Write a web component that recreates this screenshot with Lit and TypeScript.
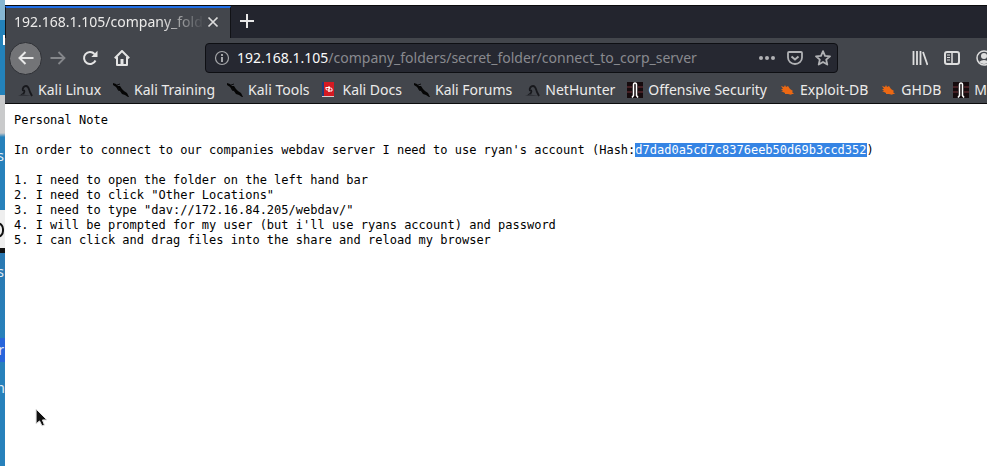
import { LitElement, html, css, svg } from "lit";
import { customElement } from "lit/decorators.js";

const icons: Record<string, unknown> = {
  linux: svg`<path d="M4 13c3-1 4-3 3-5M6 9c-1-3 1-5 3-5 3 0 3 4 4 6l2 4" fill="none" stroke="#17181c" stroke-width="1.800"/><path d="M1 14l5-2 3 1 6 1z" fill="#303238"/>`,
  knife: svg`<path d="M0 1l3 1 2 2 2 0 2 3 2 2 3 2 2 4-1 0-3-2-3-1-2-3-2-1-2-3-3-2z" fill="#050505"/><path d="M4 3l3-1M6 6l-1 2 3 1" stroke="#0c0c0e" fill="none"/>`,
  docs: svg`<path d="M1 0h2v14H1z" fill="#203c7b"/><path d="M3 0h10v14H3z" fill="#d51a22"/><path d="M1 14h12v1H1z" fill="#d8cfd0"/><path d="M5 5v2q0 1 1.500 1T8 7t1.500-1T11 7v2M5 5.500h4M7 9h4M8 4v6" stroke="#fff" fill="none"/>`,
  offsec: svg`<path d="M0 0h16v16H0z" fill="#160b0e"/><path d="M0 5h5M11 5h5M0 10h5M11 10h5" stroke="#56272d" stroke-width="1.500"/><path d="M5 15.500l1.500-2V3q0-2 1.500-2t1.500 2v10.500l1.500 2" fill="#130a0c" stroke="#fff" stroke-width="1.500"/><path d="M6 2h1v11H6z" fill="#fff"/>`,
  exploit: svg`<path d="M2 4l3 1 1-2 1 2 2-1 2 3 3 2-1 1 2 2-3 0 1 1-4-1-3 0 0-1-4-2 2 0-2-2 2 0z" fill="#ec6813"/>`,
};

const bookmarks: [string, string][] = [
  ["linux", "Kali Linux"], ["knife", "Kali Training"], ["knife", "Kali Tools"],
  ["docs", "Kali Docs"], ["knife", "Kali Forums"], ["linux", "NetHunter"],
  ["offsec", "Offensive Security"], ["exploit", "Exploit-DB"], ["exploit", "GHDB"], ["offsec", "MSFU"],
];

const glyph = (body: unknown) => html`<svg viewBox="0 0 16 16" width="16" height="16" aria-hidden="true">${body}</svg>`;

@customElement("app-root")
export class AppRoot extends LitElement {
  static styles = css`
    :host { display: grid; grid-template-columns: 5px minmax(0, 1fr); min-height: 100vh; background: #fff; overflow: hidden;
      font-family: "Noto Sans", sans-serif; font-size: 14px; line-height: 20px; color: #ecebea; }
    * { box-sizing: border-box; }
    button { border: 0; padding: 0; margin: 0; background: none; color: inherit; font: inherit; display: grid; place-items: center; flex: none; }
    svg { display: block; flex: none; }
    .desktop { position: relative; overflow: hidden; background: linear-gradient(#86b6d2 20px, #2382ba 20px, #2382ba 95px, #c9cacb 95px, #c9cacb 133px, #2781bb 137px, #2781bb 210px, #eee 210px, #eee 248px, #111 248px, #111 253px, #2a78b1 253px, #2781bb 338px, #2865db 338px, #2865db 362px, #2781bb 362px); }
    .piece { position: absolute; right: 1px; line-height: 16px; color: #e3edf4; }
    .a { top: 148px; } .b { top: 264px; } .c { top: 342px; } .d { top: 380px; right: 0; }
    .folder { position: absolute; left: 3px; top: 35px; width: 2px; height: 10px; background: #fff; }
    .ring { position: absolute; right: 1px; top: 222px; width: 14px; height: 16px; border: 2px solid #111; border-radius: 8px; }
    .window { padding-top: 5px; min-width: 0; }
    .tabs { height: 33px; display: flex; background: #23252e; border-top: 1px solid #0c0c0d; }
    .tab { width: 226px; display: flex; align-items: center; padding: 0 9px 2px 8px; background: #43464c; border-top: 2px solid #1f6fe8; border-right: 1px solid #111216; border-left: 1px solid #111216; }
    .title { flex: 1; overflow: hidden; white-space: nowrap; -webkit-mask-image: linear-gradient(90deg, #000 76%, transparent); mask-image: linear-gradient(90deg, #000 76%, transparent); }
    .plus { width: 32px; padding-bottom: 2px; }
    .toolbar { height: 40px; display: flex; align-items: center; background: #43464c; padding-left: 4px; overflow: hidden; }
    .back { width: 33px; height: 33px; border-radius: 50%; background: #737477; border: 1px solid #2e3035; }
    .nav { width: 32px; height: 32px; }
    .off { color: #85878b; }
    .url { flex: 1; min-width: 0; height: 30px; margin-left: 67px; margin-right: 66px; display: flex; align-items: center; background: #262831; border: 1px solid #0e0f13; border-radius: 4px; color: #b1b2b5; padding: 0 0 0 8px; }
    .address { flex: 1; margin-left: 7px; white-space: nowrap; overflow: hidden; color: #898a8f; }
    .address b { font-weight: 400; color: #fafafa; }
    .act { width: 28px; height: 28px; }
    .edge { margin-right: -13px; }
    .bookmarks { height: 26px; display: flex; align-items: center; gap: 12px; padding: 0 0 2px 12px; background: #43464c; border-bottom: 1px solid #0c0c0d; overflow: hidden; }
    .bookmarks a { display: flex; align-items: center; gap: 5px; color: inherit; text-decoration: none; white-space: nowrap; flex: none; }
    pre { margin: 9px 9px; font: 12px/15px "DejaVu Sans Mono", monospace; text-rendering: optimizeSpeed; color: #000; }
    mark { background: #3584e4; color: #fff; }
    .cursor { position: absolute; left: 35px; top: 408px; }
  `;

  render() {
    return html`
      <div class="desktop" aria-hidden="true">
        <i class="folder"></i><span class="piece a">s</span><i class="ring"></i><span class="piece b">s</span><span class="piece c">r</span><span class="piece d">n</span>
      </div>
      <div class="window">
        <div class="tabs">
          <div class="tab"><span class="title">192.168.1.105/company_folders</span>
            <button aria-label="Close tab">${glyph(svg`<path d="M3.500 3.500l9 9m0-9l-9 9" stroke="#dcdcdc" stroke-width="1.700"/>`)}</button></div>
          <button class="plus" aria-label="New tab">${glyph(svg`<path d="M8 1v14M1 8h14" stroke="#e8e8e8" stroke-width="2"/>`)}</button>
        </div>
        <div class="toolbar">
          <button class="back" aria-label="Back">${glyph(svg`<path d="M15.500 8H1.500M7.500 2L1.500 8l6 6" fill="none" stroke="#e8e8e8" stroke-width="2"/>`)}</button>
          <button class="nav off" aria-label="Forward" disabled>${glyph(svg`<path d="M.5 8h14M8.500 2l6 6-6 6" fill="none" stroke="currentColor" stroke-width="1.800"/>`)}</button>
          <button class="nav" aria-label="Reload">${glyph(svg`<path d="M13.500 10.500A6 6 0 1 1 12.500 4" fill="none" stroke="#e4e4e4" stroke-width="2"/><path d="M15.500.8v6.200h-6.200z" fill="#e4e4e4"/>`)}</button>
          <button class="nav" aria-label="Home">${glyph(svg`<path d="M.8 8.200L8 1l7.200 7.200M3 7v8h10V7" fill="none" stroke="#e4e4e4" stroke-width="2" stroke-linejoin="round"/><path d="M6.500 9h3v5h-3z" fill="#e4e4e4"/>`)}</button>
          <div class="url">
            ${glyph(svg`<circle cx="8" cy="8" r="6.500" fill="none" stroke="#a5a6a9" stroke-width="1.200"/><path d="M8 7v5M8 4v2" stroke="#a5a6a9" stroke-width="2"/>`)}
            <span class="address"><b>192.168.1.105</b>/company_folders/secret_folder/connect_to_corp_server</span>
            <button class="act" aria-label="Page actions">${glyph(svg`<circle cx="2" cy="8" r="2" fill="currentColor"/><circle cx="8" cy="8" r="2" fill="currentColor"/><circle cx="14" cy="8" r="2" fill="currentColor"/>`)}</button>
            <button class="act" aria-label="Save to Pocket">${glyph(svg`<path d="M2 2h12q1 0 1 1v4.500a7 6.500 0 0 1-14 0V3q0-1 1-1z" fill="none" stroke="currentColor" stroke-width="1.800"/><path d="M4.500 6.500L8 9.500l3.500-3" fill="none" stroke="currentColor" stroke-width="2"/>`)}</button>
            <button class="act" aria-label="Bookmark this page">${glyph(svg`<path d="M8 1.200l2 4.600 5 .5-3.800 3.300 1.100 5L8 12l-4.300 2.600 1.100-5L1 6.300l5-.5z" fill="none" stroke="currentColor" stroke-width="1.800" stroke-linejoin="round"/>`)}</button>
          </div>
          <button class="nav" aria-label="Library">${glyph(svg`<path d="M1.500 1v14M5 1v14M8.500 1v14M11 2l4.500 13" fill="none" stroke="#dedede" stroke-width="1.800"/>`)}</button>
          <button class="nav" aria-label="Sidebars">${glyph(svg`<rect x="1" y="2" width="14" height="12" rx="2" fill="none" stroke="#dedede" stroke-width="2"/><path d="M8 2v12" stroke="#dedede" stroke-width="1.500"/><path d="M3 5h3M3 7.500h3M3 10h3" stroke="#dedede"/>`)}</button>
          <button class="nav edge" aria-label="Account">${glyph(svg`<circle cx="8" cy="8" r="7" fill="none" stroke="#dedede" stroke-width="1.500"/><circle cx="8" cy="6" r="3" fill="#dedede"/><path d="M3 12q5-4 10 0-5 4-10 0z" fill="#dedede"/>`)}</button>
        </div>
        <nav class="bookmarks">${bookmarks.map(([icon, name]) => html`<a href="#">${glyph(icons[icon])}<span>${name}</span></a>`)}</nav>
        <pre>Personal Note

In order to connect to our companies webdav server I need to use ryan's account (Hash:<mark>d7dad0a5cd7c8376eeb50d69b3ccd352</mark>)

1. I need to open the folder on the left hand bar
2. I need to click "Other Locations"
3. I need to type "dav://172.16.84.205/webdav/"
4. I will be prompted for my user (but i'll use ryans account) and password
5. I can click and drag files into the share and reload my browser</pre>
      </div>
      <svg class="cursor" width="12" height="20" viewBox="0 0 12 20" aria-hidden="true"><path d="M1 1v15l3.500-3 2.500 5 2.500-1-2-5H12z" fill="#111" stroke="#fff"/><path d="M1 1v15l3.500-3 2.500 5 2.500-1-2-5H12z" fill="none" stroke="#bbb" stroke-width=".4"/></svg>
    `;
  }
}
